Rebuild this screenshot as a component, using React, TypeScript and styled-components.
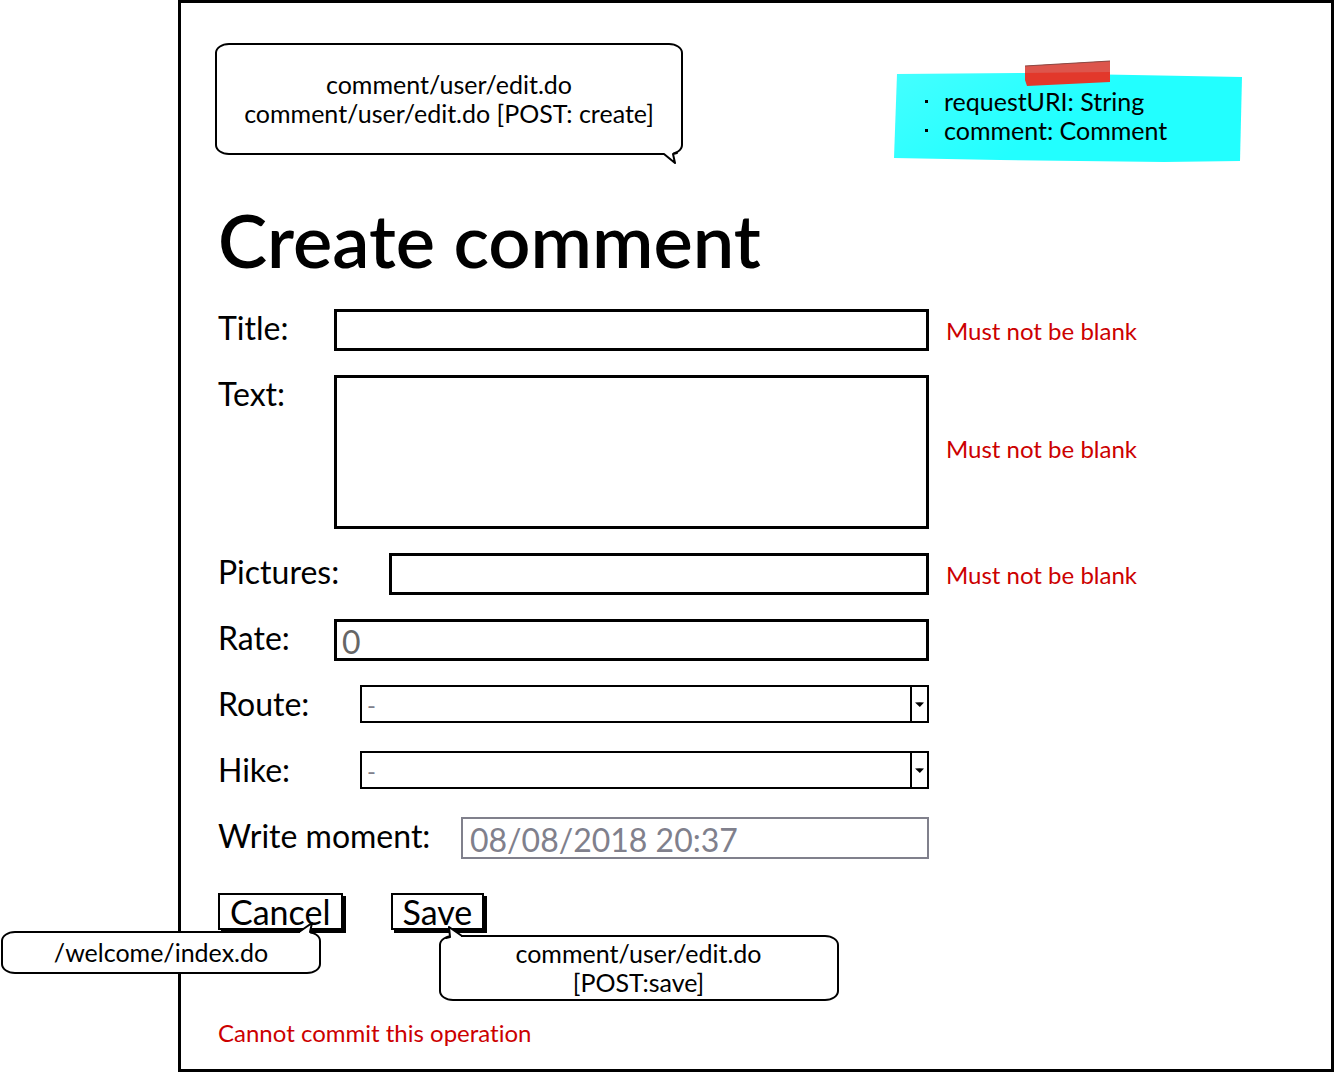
import React from "react";
import styled, { createGlobalStyle, css } from "styled-components";

const ink = "#000000";
const danger = "#cc0000";
const muted = "#80808c";

const GlobalStyle = createGlobalStyle`
  *, *::before, *::after { box-sizing: border-box; }
  body {
    margin: 0;
    background: #ffffff;
    color: ${ink};
    font-family: Lato, "Open Sans", "Liberation Sans", sans-serif;
    font-variant-ligatures: none;
  }
  button, input, select, textarea { font: inherit; color: inherit; }
`;

const Frame = styled.main`
  margin: 0 1px 0 178px;
  padding: 40px 37px 22px;
  border: 3px solid ${ink};
`;

const Header = styled.header`
  display: flex;
  justify-content: space-between;
  align-items: flex-start;
  margin-left: -3px;
  padding-right: 52px;
`;

const bubbleShape = css`
  display: flex;
  flex-direction: column;
  justify-content: center;
  align-items: center;
  border: 2px solid ${ink};
  border-radius: 14px / 10px;
  background: #ffffff;
  font-size: 25px;
  line-height: 29px;
  text-align: center;
`;

const RouteBubble = styled.aside`
  ${bubbleShape}
  position: relative;
  width: 468px;
  padding: 25px 0;
`;

const ActionBubble = styled.aside<{ $left: number; $top: number; $width: number; $pad: number }>`
  ${bubbleShape}
  position: absolute;
  z-index: 1;
  left: ${(p) => p.$left}px;
  top: ${(p) => p.$top}px;
  width: ${(p) => p.$width}px;
  padding: ${(p) => p.$pad}px 0;
`;

const Tail = styled.svg<{ $side: "top" | "bottom"; $left: number }>`
  position: absolute;
  left: ${(p) => p.$left}px;
  ${(p) => (p.$side === "top" ? "top: -12px;" : "bottom: -12px;")}
  width: 20px;
  height: 16px;
  overflow: visible;
  fill: none;
  stroke: ${ink};
  stroke-width: 2;
  stroke-linejoin: round;
  stroke-linecap: round;

  path:first-child {
    fill: #ffffff;
    stroke: none;
  }
`;

const Note = styled.aside`
  position: relative;
  width: 348px;
  margin-top: 30px;
  padding: 14px 20px 18px 50px;
  font-size: 25px;
  line-height: 29px;
`;

const Paper = styled.svg`
  position: absolute;
  z-index: -1;
  inset: 0;
  width: 100%;
  height: 100%;
`;

const Tape = styled.svg`
  position: absolute;
  left: 130px;
  top: -13px;
  width: 88px;
  height: 27px;
`;

const ParamList = styled.ul`
  margin: 0;
  padding: 0;
  list-style: none;
`;

const Param = styled.li`
  display: flex;
  align-items: center;
  margin-left: -19px;
  &::before {
    content: "";
    width: 3px;
    height: 3px;
    margin-right: 16px;
    background: ${ink};
  }
`;

const Title = styled.h1`
  margin: 33px 0 25px;
  font-size: 74px;
  line-height: 88px;
  font-weight: 600;
`;

const Form = styled.form`
  display: grid;
  gap: 24px;
`;

const Row = styled.div`
  display: grid;
  grid-template-columns: minmax(0, 711px) minmax(0, 1fr);
  column-gap: 17px;
  align-items: center;
  min-height: 42px;
`;

const Field = styled.div`
  display: flex;
  align-items: flex-start;
  min-height: 42px;
`;

const Label = styled.label<{ $width: number }>`
  flex: 0 0 ${(p) => p.$width}px;
  font-size: 32px;
  line-height: 38px;
  white-space: nowrap;
`;

const Input = styled.input`
  flex: 1;
  min-width: 0;
  height: 42px;
  padding: 2px 5px 0;
  border: 3px solid ${ink};
  background: #ffffff;
  color: #666666;
  font-size: 32px;
  outline: none;
  &:read-only {
    border: 2px solid ${muted};
    padding: 2px 7px 0;
    color: ${muted};
  }
`;

const TextArea = styled.textarea`
  flex: 1;
  min-width: 0;
  height: 154px;
  padding: 4px 5px;
  border: 3px solid ${ink};
  background: #ffffff;
  font-size: 32px;
  resize: none;
  outline: none;
`;

const SelectBox = styled.div`
  display: grid;
  flex: 1;
  height: 38px;
  border: 2px solid ${ink};
`;

const Select = styled.select`
  grid-area: 1 / 1;
  width: 100%;
  padding: 0 24px 0 5px;
  border: 0;
  background: #ffffff;
  color: ${muted};
  font-size: 24px;
  appearance: none;
  outline: none;
`;

const Arrow = styled.span`
  grid-area: 1 / 1;
  justify-self: end;
  display: flex;
  justify-content: center;
  align-items: center;
  width: 17px;
  border-left: 2px solid ${ink};
  pointer-events: none;
  svg { width: 9px; height: 5px; }
`;

const ErrorText = styled.p<{ $tall?: boolean }>`
  margin: 0;
  padding-bottom: ${(p) => (p.$tall ? 8 : 0)}px;
  color: ${danger};
  font-size: 24px;
  line-height: 29px;
`;

const Actions = styled.div`
  display: flex;
  gap: 48px;
  margin: 10px 0 88px;
`;

const Action = styled.div`
  position: relative;
`;

const Button = styled.button`
  display: block;
  height: 37px;
  padding: 0 10px;
  border: 2px solid ${ink};
  background: #ffffff;
  box-shadow: 3px 3px 0 ${ink};
  font-size: 34px;
  line-height: 32px;
`;

function Dropdown({ id }: { id: string }) {
  return (
    <SelectBox>
      <Select id={id}>
        <option>-</option>
      </Select>
      <Arrow aria-hidden="true">
        <svg viewBox="0 0 9 5"><path d="M0 0.5 Q4.5 0 9 0.5 L4.8 5 Z" /></svg>
      </Arrow>
    </SelectBox>
  );
}

type RowProps = {
  id: string;
  label: string;
  width: number;
  error?: string;
  tall?: boolean;
  children: React.ReactNode;
};

function FormRow({ id, label, width, error, tall, children }: RowProps) {
  return (
    <Row>
      <Field>
        <Label htmlFor={id} $width={width}>{label}</Label>
        {children}
      </Field>
      {error && <ErrorText $tall={tall}>{error}</ErrorText>}
    </Row>
  );
}

export default function App() {
  const blank = "Must not be blank";
  return (
    <>
      <GlobalStyle />
      <Frame>
        <Header>
          <RouteBubble>
            <span>comment/user/edit.do</span>
            <span>comment/user/edit.do [POST: create]</span>
            <Tail $side="bottom" $left={444} viewBox="0 0 20 16" aria-hidden="true">
              <path d="M0 3 L0 6 L13 13 L12 3 Z" />
              <path d="M-1 5 L3 5 L14 14 L12 5 L16 4" />
            </Tail>
          </RouteBubble>
          <Note>
            <Paper viewBox="0 0 348 90" preserveAspectRatio="none" aria-hidden="true">
              <defs>
                <linearGradient id="paper" x1="0" y1="0" x2="1" y2="0.4">
                  <stop offset="0" stopColor="#44ffff" />
                  <stop offset="0.6" stopColor="#22ffff" />
                </linearGradient>
              </defs>
              <path fill="url(#paper)" d="M3 1 L130 0 L348 4 L346 88 L270 89 L106 87 L0 85 Z" />
            </Paper>
            <Tape viewBox="0 0 88 27" aria-hidden="true">
              <path fill="#e2382b" d="M1 6 L86 1 L86 22 L3 26 L1 20 Z" />
              <path fill="#dd554c" d="M1 6 L86 1 L86 12 L1 13 Z" />
              <path fill="none" stroke="#8a4a45" d="M1 6 L86 1" />
            </Tape>
            <ParamList>
              <Param>requestURI: String</Param>
              <Param>comment: Comment</Param>
            </ParamList>
          </Note>
        </Header>

        <Title>Create comment</Title>

        <Form onSubmit={(e) => e.preventDefault()}>
          <FormRow id="title" label="Title:" width={116} error={blank}>
            <Input id="title" />
          </FormRow>
          <FormRow id="text" label="Text:" width={116} error={blank} tall>
            <TextArea id="text" />
          </FormRow>
          <FormRow id="pictures" label="Pictures:" width={171} error={blank}>
            <Input id="pictures" />
          </FormRow>
          <FormRow id="rate" label="Rate:" width={116}>
            <Input id="rate" defaultValue="0" />
          </FormRow>
          <FormRow id="route" label="Route:" width={142}>
            <Dropdown id="route" />
          </FormRow>
          <FormRow id="hike" label="Hike:" width={142}>
            <Dropdown id="hike" />
          </FormRow>
          <FormRow id="moment" label="Write moment:" width={243}>
            <Input id="moment" value="08/08/2018 20:37" readOnly />
          </FormRow>

          <Actions>
            <Action>
              <Button type="button">Cancel</Button>
              <ActionBubble $left={-217} $top={38} $width={320} $pad={5}>
                <span>/welcome/index.do</span>
                <Tail $side="top" $left={296} viewBox="0 0 20 16" aria-hidden="true">
                  <path d="M1 13 L1 11 L13 2 L11 13 Z" />
                  <path d="M0 11 L13 2 L11 11 L14 12" />
                </Tail>
              </ActionBubble>
            </Action>
            <Action>
              <Button type="submit">Save</Button>
              <ActionBubble $left={48} $top={42} $width={400} $pad={2}>
                <span>comment/user/edit.do</span>
                <span>[POST:save]</span>
                <Tail $side="top" $left={5} viewBox="0 0 20 16" aria-hidden="true">
                  <path d="M4 14 L3 2 L15 11 L15 13 Z" />
                  <path d="M0 13 L4 12 L3 2 L16 11" />
                </Tail>
              </ActionBubble>
            </Action>
          </Actions>
        </Form>

        <ErrorText role="alert">Cannot commit this operation</ErrorText>
      </Frame>
    </>
  );
}
